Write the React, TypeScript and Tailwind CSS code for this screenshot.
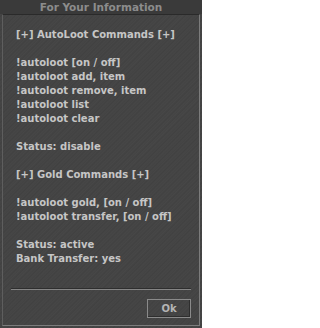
import React from 'react';

const lines: string[] = [
  '[+] AutoLoot Commands [+]',
  '',
  '!autoloot [on / off]',
  '!autoloot add, item',
  '!autoloot remove, item',
  '!autoloot list',
  '!autoloot clear',
  '',
  'Status: disable',
  '',
  '[+] Gold Commands [+]',
  '',
  '!autoloot gold, [on / off]',
  '!autoloot transfer, [on / off]',
  '',
  'Status: active',
  'Bank Transfer: yes',
];

export default function App() {
  return (
    <div
      className="w-[202px] h-[328px] flex flex-col bg-[#444444] bg-[repeating-linear-gradient(135deg,#474747_0px,#414141_2px,#464646_3px,#434343_5px)] select-none"
      style={{ fontFamily: '"DejaVu Sans", Verdana, sans-serif' }}
    >
      {/* Title bar */}
      <div className="h-[14px] flex items-center justify-center bg-[#3a3a3a]">
        <span className="text-[10.5px] font-bold leading-none text-[#8c8c8c]">For Your Information</span>
      </div>

      {/* Body panel */}
      <div className="flex-1 mx-[2px] mb-[2px] flex flex-col border-t border-t-[#2a2a2a] border-l border-l-[#5e5e5e] border-r border-r-[#7c7c7c] border-b border-b-[#7c7c7c]">
        <div className="pt-[13px] pl-[13px] text-[10px] font-bold leading-[14px] text-[#c6c6c6]">
          {lines.map((line, i) => (
            <div key={i} className="h-[14px] whitespace-pre">
              {line}
            </div>
          ))}
        </div>

        <div className="mt-[22px] mx-[8px] h-[2px] border-t border-t-[#2e2e2e] border-b border-b-[#858585]" />

        <div className="mt-[9px] mr-[8px] flex justify-end">
          <button
            type="button"
            className="w-[44px] h-[19px] flex items-center justify-center border border-[#8a8a8a] shadow-[inset_-1px_-1px_0_#2e2e2e] text-[10px] font-bold text-[#b4b4b4]"
          >
            Ok
          </button>
        </div>
      </div>
    </div>
  );
}
